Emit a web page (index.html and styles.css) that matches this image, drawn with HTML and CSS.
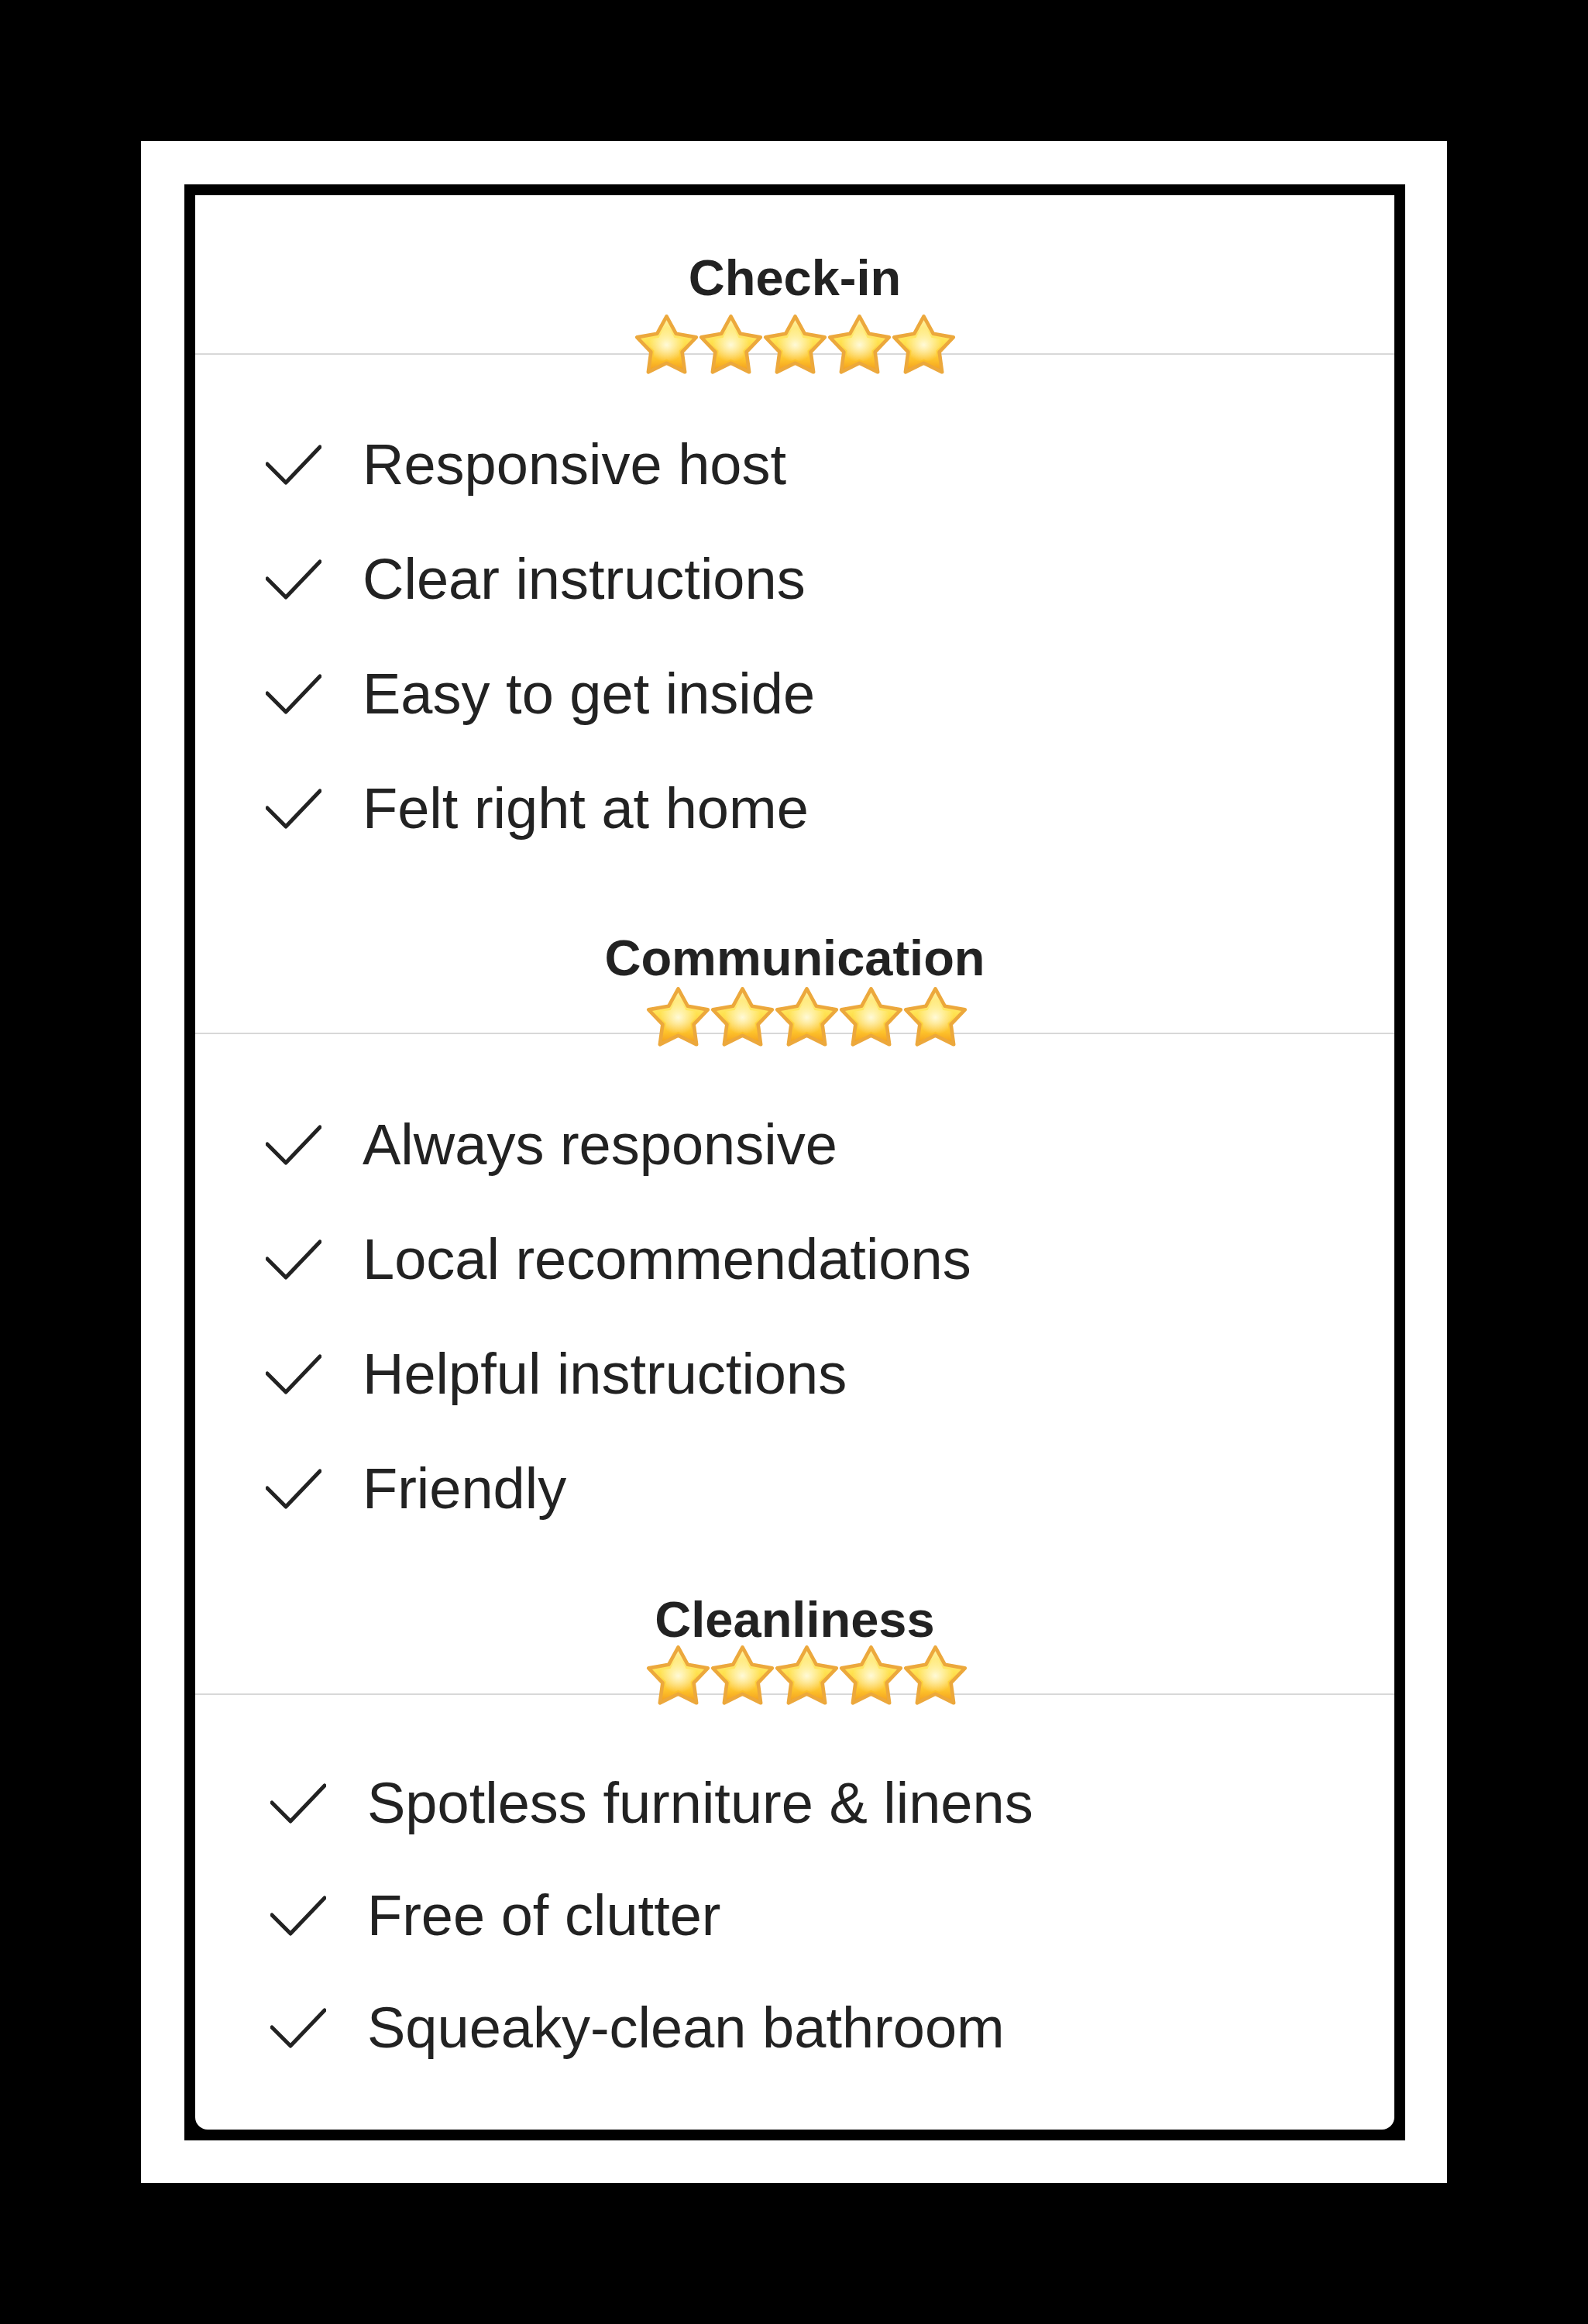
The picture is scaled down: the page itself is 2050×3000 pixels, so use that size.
FILE: index.html
```html
<!DOCTYPE html>
<html lang="en">

<head>
    <meta charset="UTF-8">
    <meta name="viewport" content="width=device-width, initial-scale=1.0">
    <title>Guest Ratings</title>
    <link rel="stylesheet" href="styles.css">
</head>

<body>
    <!-- Shared star and checkmark shapes -->
    <svg class="sprites" width="0" height="0" aria-hidden="true">
        <defs>
            <linearGradient id="star-fill" x1="0" y1="0" x2="0" y2="1">
                <stop offset="0" stop-color="#fff3ad" />
                <stop offset="0.45" stop-color="#ffe250" />
                <stop offset="0.78" stop-color="#fdc22b" />
                <stop offset="1" stop-color="#f29a1b" />
            </linearGradient>
            <radialGradient id="star-glow" cx="0.5" cy="0.5" r="0.4">
                <stop offset="0" stop-color="#fffde8" stop-opacity="0.9" />
                <stop offset="1" stop-color="#fffde8" stop-opacity="0" />
            </radialGradient>
            <symbol id="star" viewBox="1 -1 98 93">
                <polygon points="50,3 64.7,29.8 95.6,35.2 74,57.8 78.2,88.8 50,75 21.8,88.8 26,57.8 4.4,35.2 35.3,29.8"
                    fill="url(#star-fill)" stroke="#eca83c" stroke-width="5.5" stroke-linejoin="round" />
                <polygon points="50,14 62,36 86,39 69,56 72,80 50,69 28,80 31,56 14,39 38,36"
                    fill="url(#star-glow)" />
            </symbol>
            <symbol id="check" viewBox="0 0 72 52">
                <polyline points="2,25 26,49 70,3" fill="none" stroke="#222" stroke-width="5"
                    stroke-linecap="round" stroke-linejoin="round" />
            </symbol>
        </defs>
    </svg>

    <div class="mat">
        <div class="frame">
            <div class="card">

                <!-- Check-in -->
                <section class="section section-checkin">
                    <div class="section-head">
                        <h2>Check-in</h2>
                        <div class="stars">
                            <svg><use href="#star" /></svg>
                            <svg><use href="#star" /></svg>
                            <svg><use href="#star" /></svg>
                            <svg><use href="#star" /></svg>
                            <svg><use href="#star" /></svg>
                        </div>
                    </div>
                    <ul class="list">
                        <li><svg><use href="#check" /></svg>Responsive host</li>
                        <li><svg><use href="#check" /></svg>Clear instructions</li>
                        <li><svg><use href="#check" /></svg>Easy to get inside</li>
                        <li><svg><use href="#check" /></svg>Felt right at home</li>
                    </ul>
                </section>

                <!-- Communication -->
                <section class="section section-communication">
                    <div class="section-head">
                        <h2>Communication</h2>
                        <div class="stars">
                            <svg><use href="#star" /></svg>
                            <svg><use href="#star" /></svg>
                            <svg><use href="#star" /></svg>
                            <svg><use href="#star" /></svg>
                            <svg><use href="#star" /></svg>
                        </div>
                    </div>
                    <ul class="list">
                        <li><svg><use href="#check" /></svg>Always responsive</li>
                        <li><svg><use href="#check" /></svg>Local recommendations</li>
                        <li><svg><use href="#check" /></svg>Helpful instructions</li>
                        <li><svg><use href="#check" /></svg>Friendly</li>
                    </ul>
                </section>

                <!-- Cleanliness -->
                <section class="section section-cleanliness">
                    <div class="section-head">
                        <h2>Cleanliness</h2>
                        <div class="stars">
                            <svg><use href="#star" /></svg>
                            <svg><use href="#star" /></svg>
                            <svg><use href="#star" /></svg>
                            <svg><use href="#star" /></svg>
                            <svg><use href="#star" /></svg>
                        </div>
                    </div>
                    <ul class="list">
                        <li><svg><use href="#check" /></svg>Spotless furniture &amp; linens</li>
                        <li><svg><use href="#check" /></svg>Free of clutter</li>
                        <li><svg><use href="#check" /></svg>Squeaky-clean bathroom</li>
                    </ul>
                </section>

            </div>
        </div>
    </div>
</body>

</html>
```

FILE: styles.css
```css
body {
    margin: 0;
    background: #000;
    font-family: 'Liberation Sans', Arial, sans-serif;
    color: #222;
}

.sprites {
    position: absolute;
    width: 0;
    height: 0;
    overflow: hidden;
}

/* white mat around the framed card */
.mat {
    width: 1686px;
    box-sizing: border-box;
    margin: 182px 0 0 182px;
    padding: 56px 54px 55px 56px;
    background: #fff;
}

.frame {
    background: #000;
    padding: 14px;
}

.card {
    background: #fff;
    border-radius: 0 0 16px 16px;
    padding: 74px 0 59px;
}

.section-head {
    text-align: center;
    border-bottom: 2px solid #d8d8d8;
}

.section-head h2 {
    margin: 0;
    font-size: 65px;
    line-height: 65px;
    font-weight: 700;
    color: #222;
}

/* stars sit on top of the divider line */
.stars {
    display: flex;
    justify-content: center;
    margin: 14px 0 -27px;
}

.stars svg {
    display: block;
    width: 83px;
    height: 78px;
}

.list {
    list-style: none;
    margin: 0;
    padding: 68px 0 0 91px;
}

.list li {
    display: flex;
    align-items: center;
    height: 148px;
    font-size: 74px;
    line-height: 148px;
    white-space: nowrap;
}

.list li svg {
    flex-shrink: 0;
    width: 72px;
    height: 52px;
    margin-right: 53px;
}

.section-communication {
    margin-top: 86px;
}

.section-communication .stars {
    margin: 4px 0 -18px;
    padding-left: 30px;
}

.section-communication .list {
    padding-top: 69px;
}

.section-cleanliness {
    margin-top: 62px;
}

.section-cleanliness .stars {
    margin: 0 0 -15px;
    padding-left: 30px;
}

.section-cleanliness .list {
    padding: 67px 0 0 97px;
}

.section-cleanliness .list li {
    height: 145px;
    line-height: 145px;
}
```
